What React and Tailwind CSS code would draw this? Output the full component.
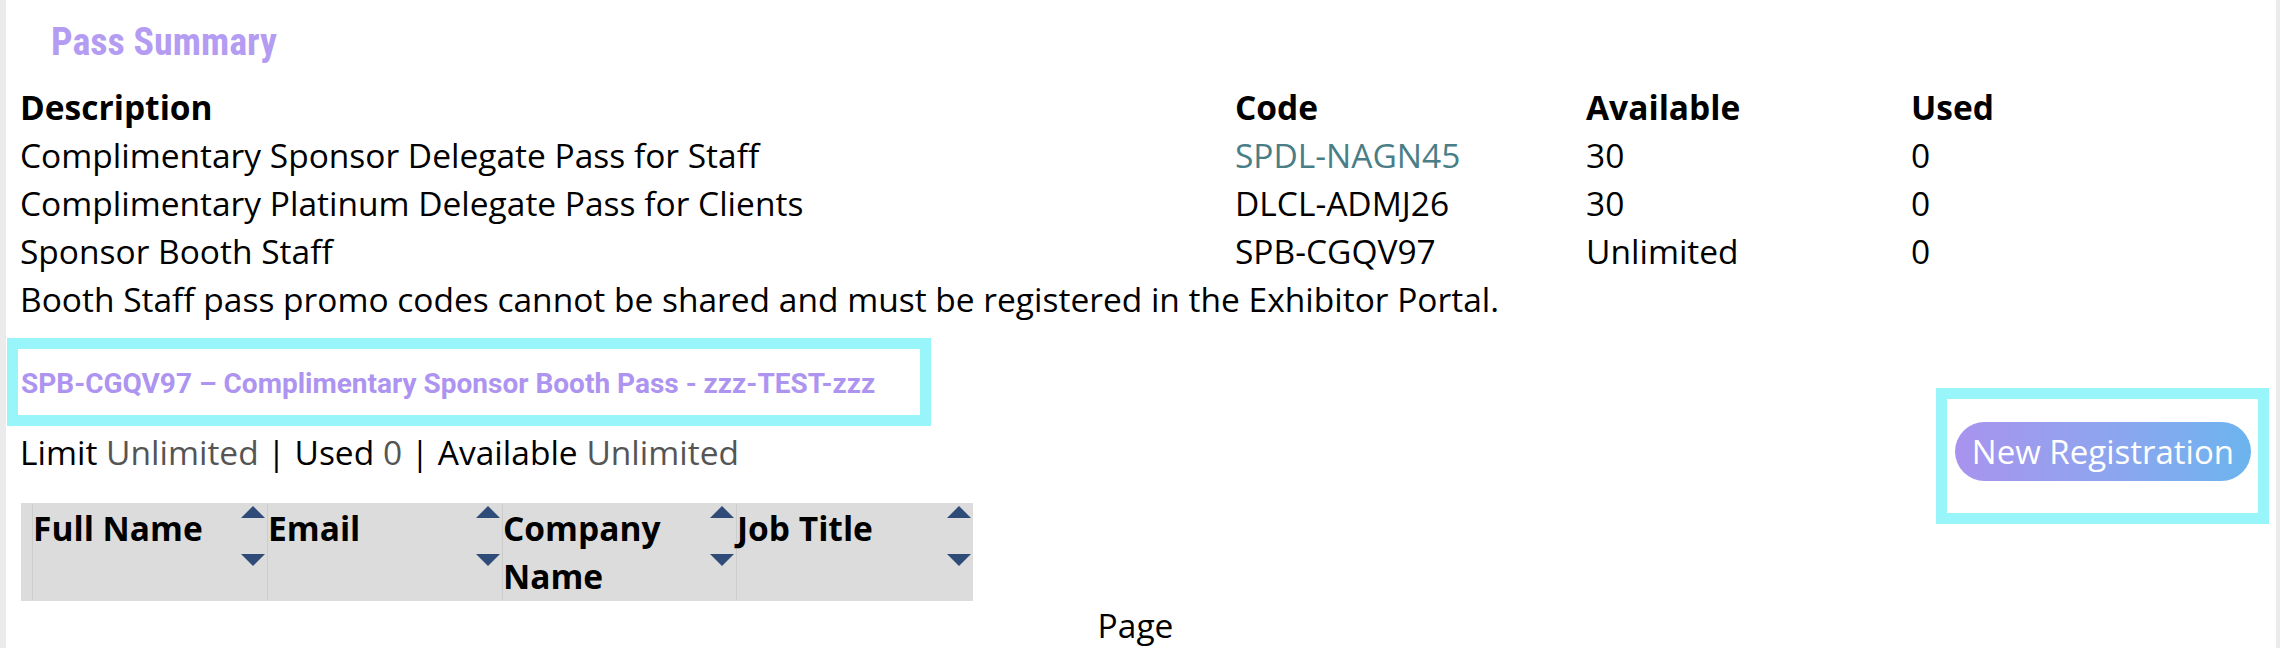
const passes = [
  { desc: "Complimentary Sponsor Delegate Pass for Staff", code: "SPDL-NAGN45", link: true, available: "30", used: "0" },
  { desc: "Complimentary Platinum Delegate Pass for Clients", code: "DLCL-ADMJ26", link: false, available: "30", used: "0" },
  { desc: "Sponsor Booth Staff", code: "SPB-CGQV97", link: false, available: "Unlimited", used: "0" },
];

const columns = ["Full Name", "Email", "Company Name", "Job Title"];

function SortArrows() {
  return (
    <div className="mr-[2px] flex w-[24px] shrink-0 flex-col gap-[36px] pt-[2px]">
      <svg width="24" height="12" viewBox="0 0 24 12">
        <polygon points="12,0 24,12 0,12" fill="#2f4b78" />
      </svg>
      <svg width="24" height="12" viewBox="0 0 24 12">
        <polygon points="0,0 24,0 12,12" fill="#2f4b78" />
      </svg>
    </div>
  );
}

export default function App() {
  return (
    <div className="min-h-screen bg-[#ebebeb] pl-[6px] pr-[4px] font-['Open_Sans',sans-serif] text-[33.5px] leading-[48px] text-black">
      <div className="min-h-[648px] bg-white pl-[14px] pr-[25px] pt-[22px]">
        <h2 className="ml-[31px] font-['Roboto',sans-serif] text-[38px] font-bold leading-[40px] font-stretch-[87.5%] text-[#b39cf2]">
          Pass Summary
        </h2>

        <div className="mt-[21px] grid grid-cols-[1215px_351px_325px_1fr]">
          <div className="font-bold">Description</div>
          <div className="font-bold">Code</div>
          <div className="font-bold">Available</div>
          <div className="font-bold">Used</div>
          {passes.map((p) => (
            <div key={p.code} className="contents">
              <div>{p.desc}</div>
              <div className={p.link ? "text-[#4a7e87]" : ""}>{p.code}</div>
              <div>{p.available}</div>
              <div>{p.used}</div>
            </div>
          ))}
        </div>
        <p>Booth Staff pass promo codes cannot be shared and must be registered in the Exhibitor Portal.</p>

        <div className="-ml-[13px] mt-[15px] w-[924px] border-[11px] border-[#98f5f9]">
          <h3 className="whitespace-nowrap pl-[3px] pt-[3px] font-['Roboto',sans-serif] text-[28px] font-bold leading-[63px] text-[#ae94f1]">
            SPB-CGQV97 – Complimentary Sponsor Booth Pass - zzz-TEST-zzz
          </h3>
        </div>

        <div className="mt-[2px] flex h-[48px] items-start justify-between">
          <p>
            Limit <span className="text-[#555]">Unlimited</span> | Used <span className="text-[#555]">0</span> | Available{" "}
            <span className="text-[#555]">Unlimited</span>
          </p>
          <div className="relative -mt-[6px]">
            <button className="h-[59px] rounded-full bg-linear-to-r from-[#a893ee] to-[#6bb4ee] px-[17px] text-[33px] leading-[59px] text-white">
              New Registration
            </button>
            <div className="pointer-events-none absolute -bottom-[43px] -left-[19px] -right-[18px] -top-[34px] border-[11px] border-[#98f5f9]" />
          </div>
        </div>

        <div className="ml-[1px] mt-[27px] grid w-[952px] grid-cols-[11px_235px_235px_234px_237px] bg-[#dcdcdc] py-[1px]">
          <div />
          {columns.map((c) => (
            <div key={c} className="flex border-l border-[#cdcdcd] font-bold">
              <span className="flex-1">{c}</span>
              <SortArrows />
            </div>
          ))}
        </div>

        <p className="text-center">Page</p>
      </div>
    </div>
  );
}
